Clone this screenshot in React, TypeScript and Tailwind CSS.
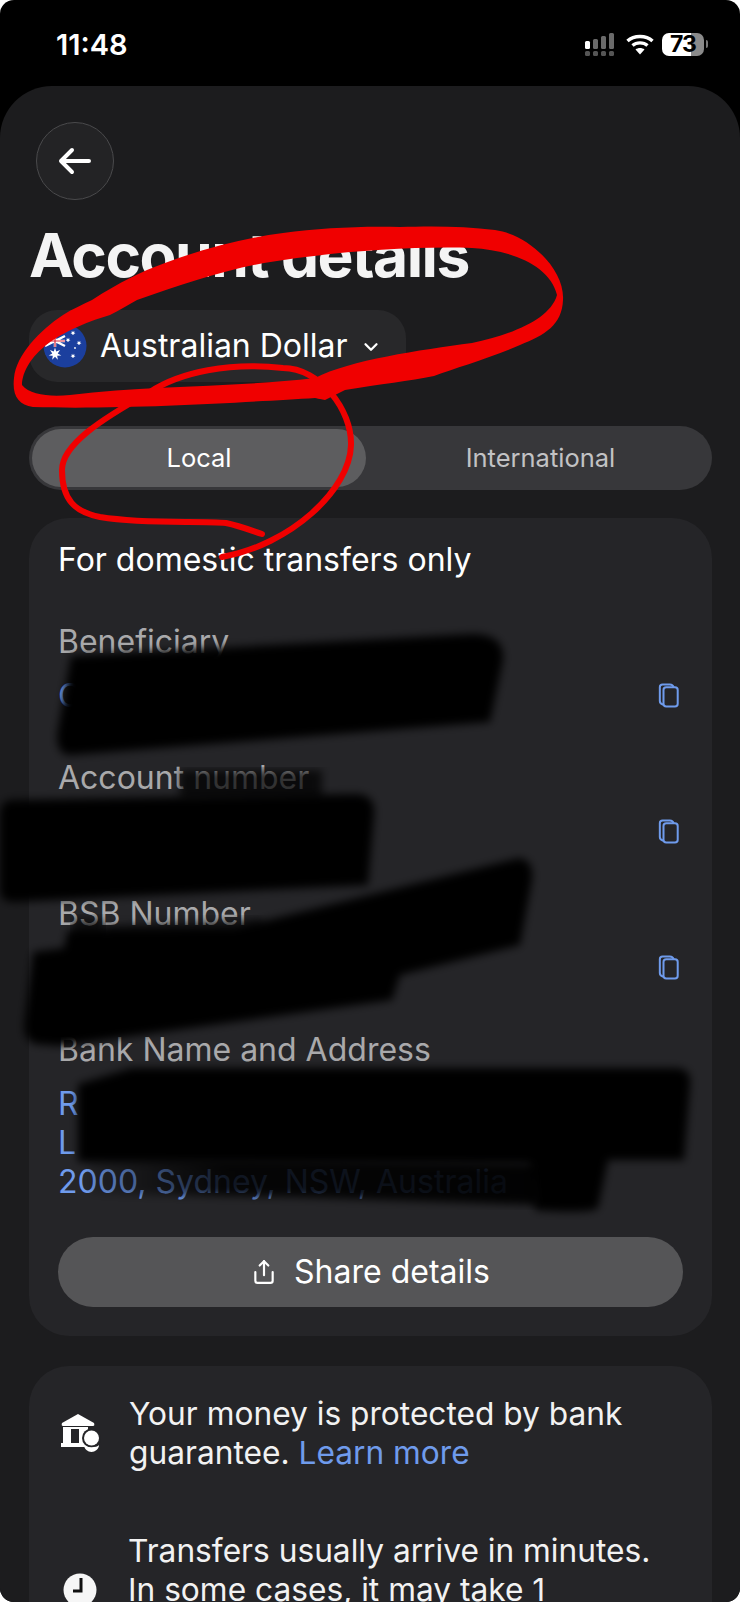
import { ChevronDown, Share } from "lucide-react";

const font = { fontFamily: "Inter, 'Liberation Sans', sans-serif" };

function CopyIcon() {
  return (
    <svg width="22" height="27" viewBox="0 0 24 28" fill="none" stroke="#6f9bec" strokeWidth="2.2">
      <path d="M6 24 C3.5 23.5 2 22 2 20 V5 C2 3 3.5 2 5 2 H13 C15 2 16.5 3 17 5" />
      <rect x="6" y="5" width="15.5" height="21" rx="3" />
    </svg>
  );
}

function BankIcon() {
  return (
    <svg width="40" height="38" viewBox="0 0 40 38" fill="white">
      <path d="M17 0 L33 9 Q34 12 32 12 H2 Q0 12 1 9 Z" />
      <path fillRule="evenodd" d="M2 13 H27 V32 H33 V33 H0 V29 H2 Z M10 15 V29 H18 V15 Z" />
      <circle cx="30.500" cy="24" r="9.500" fill="#252528" />
      <circle cx="30.500" cy="24" r="7.500" />
      <path d="M23 31 C25 34 36 34 38 31 C38 35 34 38 30.500 38 C27 38 23 35 23 31 Z" />
    </svg>
  );
}

function ClockIcon() {
  return (
    <svg width="34" height="34" viewBox="0 0 34 34">
      <circle cx="17" cy="17" r="16.500" fill="#f6f6f6" />
      <path d="M18 5 V18 H10" fill="none" stroke="#111" strokeWidth="3" />
    </svg>
  );
}

// seven pointed star of the flag
function starPoints(cx: number, cy: number, outer: number, inner: number) {
  const points: string[] = [];
  for (let i = 0; i < 14; i++) {
    const r = i % 2 === 0 ? outer : inner;
    const a = -Math.PI / 2 + (i * Math.PI) / 7;
    points.push(`${cx + r * Math.cos(a)},${cy + r * Math.sin(a)}`);
  }
  return points.join(" ");
}

function Flag() {
  return (
    <svg width="44" height="44" viewBox="0 0 44 44">
      <circle cx="22" cy="22" r="21.500" fill="#1b3f9e" />
      <path d="M2 12 L22 22 M22 12 L2 22 M12 10 V23 M1 17 H22" stroke="white" strokeWidth="2.500" />
      <path d="M12 10 V23 M1 17 H22" stroke="#d8283c" strokeWidth="1.200" />
      <polygon points={starPoints(12, 30, 6.5, 2.8)} fill="white" />
      <polygon points={starPoints(30, 9, 2.6, 1.1)} fill="white" />
      <polygon points={starPoints(36, 19, 2.6, 1.1)} fill="white" />
      <polygon points={starPoints(25, 16, 2.6, 1.1)} fill="white" />
      <polygon points={starPoints(30, 32, 2.6, 1.1)} fill="white" />
      <circle cx="32" cy="24" r="0.900" fill="white" />
    </svg>
  );
}

function StatusIcons() {
  return (
    <div className="flex items-center mt-[4px]">
      <svg width="32" height="24" viewBox="0 0 32 24">
        <rect x="1" y="9" width="5" height="8" rx="1.500" fill="white" />
        <rect x="9" y="7" width="5" height="10" rx="1.500" fill="#6a6a6a" />
        <rect x="17" y="4" width="5" height="13" rx="1.500" fill="#6a6a6a" />
        <rect x="25" y="1" width="5" height="16" rx="1.500" fill="#6a6a6a" />
        <rect x="1" y="19" width="5" height="5" rx="1.500" fill="#555" />
        <rect x="9" y="19" width="5" height="5" rx="1.500" fill="#555" />
        <rect x="17" y="19" width="5" height="5" rx="1.500" fill="#555" />
        <rect x="25" y="19" width="5" height="5" rx="1.500" fill="#555" />
      </svg>
      <svg width="28" height="22" viewBox="0 0 28 22" fill="none" stroke="white" strokeWidth="3.400" className="ml-[10px] mr-[8px]">
        <path d="M1.500 8 C8 2 20 2 26.500 8" />
        <path d="M6.500 12.500 C10.500 9 17.500 9 21.500 12.500" />
        <path d="M14 21.500 L9.500 16.500 C12 14.500 16 14.500 18.500 16.500 Z" fill="white" stroke="none" />
      </svg>
      <div className="flex items-center gap-[2px]">
        <div className="w-[42px] h-[23px] rounded-[7px] bg-[linear-gradient(90deg,#fff_0,#fff_70%,#8a8a8a_70%,#8a8a8a_100%)] flex items-center justify-center text-black text-[23px] font-bold tracking-[-1px]">
          73
        </div>
        <div className="w-[2px] h-[8px] bg-[#777] rounded-r-sm" />
      </div>
    </div>
  );
}

function DetailRow({ label, value }: { label: string; value?: string }) {
  return (
    <div className="flex items-start justify-between h-[136px]">
      <div>
        <div className="text-[32px] leading-[39px] text-[#a9a9ab]">{label}</div>
        {value && <div className="text-[32px] leading-[39px] mt-[15px] text-[#6f9bec]">{value}</div>}
      </div>
      <div className="mt-[60px] mr-[4px]">
        <CopyIcon />
      </div>
    </div>
  );
}

function Scribbles() {
  return (
    <svg className="absolute inset-0 pointer-events-none" width="740" height="1602" viewBox="0 0 740 1602">
      <defs>
        <filter id="soft" x="-5%" y="-10%" width="110%" height="120%">
          <feGaussianBlur stdDeviation="4" />
        </filter>
        <linearGradient id="fade" x1="0" x2="1" y1="0" y2="0">
          <stop offset="0" stopColor="#000" stopOpacity="0.15" />
          <stop offset="0.3" stopColor="#000" stopOpacity="0.85" />
          <stop offset="1" stopColor="#000" stopOpacity="0.94" />
        </linearGradient>
      </defs>
      <path d="M180 770 H322 V800 H180 Z" fill="#000" opacity="0.7" filter="url(#soft)" />
      <path d="M72 918 H104 V950 H72 Z" fill="#000" opacity="0.6" filter="url(#soft)" />
      <path d="M104 926 L262 918 V945 H104 Z" fill="#000" opacity="0.5" filter="url(#soft)" />
      <g fill="#000" filter="url(#soft)">
        <path d="M71 656 L472 634 Q505 634 503 660 L490 722 L70 755 Q57 755 57 735 Z" />
        <path d="M10 800 L358 794 Q376 796 374 815 L368 885 L14 902 Q0 902 0 890 V815 Q0 802 10 800 Z" />
        <path d="M236 928 L519 858 Q534 860 532 880 L520 945 L400 975 L392 1000 L60 1046 L35 1044 Q24 1040 24 1025 L33 952 L64 948 L68 930 Z" />
        <path d="M78 1084 L132 1068 H675 Q692 1068 690 1085 L684 1160 H608 L598 1208 Q590 1214 535 1210 L530 1164 L78 1162 Z" />
      </g>
      <path d="M90 1158 L540 1164 V1205 L290 1197 L90 1194 Z" fill="url(#fade)" filter="url(#soft)" />
      <path
        fill="#f00000"
        fillRule="evenodd"
        d="M14 378 C16 355 40 330 63 315 C72 309 82 305 92 300 C120 282 140 272 165 263 C205 248 245 238 283 233 C320 228 360 226 400 227 C430 226 465 226 495 230 C530 235 565 270 563 300 C562 325 545 335 520 345 C490 358 455 368 434 376 C410 381 380 384 345 390 L325 400 L315 398 C250 402 120 410 33 407 C18 405 12 395 14 378 Z M22 385 C22 375 28 360 45 346 C58 335 85 322 110 315 C120 310 128 305 137 300 C180 285 225 270 264 263 C330 252 410 246 472 248 C510 250 550 265 557 295 C550 320 510 335 472 343 C420 350 350 360 315 378 C230 388 150 385 70 395 C50 397 30 395 22 385 Z"
      />
      <circle cx="321" cy="389" r="10" fill="#f00000" />
      <path
        fill="none"
        stroke="#f00000"
        strokeWidth="6"
        strokeLinecap="round"
        d="M222 557 C290 545 350 490 351 445 C352 410 320 368 283 368 C230 362 180 372 150 392 C100 420 62 445 62 470 C62 500 75 512 100 517 C150 525 200 520 226 523 C240 526 250 530 262 534"
      />
    </svg>
  );
}

export default function App() {
  return (
    <div className="w-[740px] h-[1602px] bg-white">
      <div className="relative w-[740px] h-[1602px] overflow-hidden rounded-[14px] bg-black text-white" style={font}>
        <div className="h-[86px] flex items-start justify-between pl-[56px] pr-[32px] pt-[28px]">
          <span className="text-[29px] leading-[34px] font-semibold">11:48</span>
          <StatusIcons />
        </div>

        <div className="h-[1516px] rounded-t-[52px] bg-[#1c1c1e] px-[29px] pt-[36px]">
          <button className="w-[78px] h-[78px] ml-[7px] rounded-full border border-[#4a4a4c] bg-[#232325] flex items-center justify-center">
            <svg width="34" height="28" viewBox="0 0 34 28" fill="none" stroke="white" strokeWidth="4" strokeLinecap="round" strokeLinejoin="round">
              <path d="M31 14 H3 M14 3 L3 14 L14 25" />
            </svg>
          </button>

          <h1 className="mt-[20px] text-[60.500px] leading-[70px] font-bold tracking-[-1.500px] text-[#f4f4f4]">Account details</h1>

          <div className="mt-[20px] w-[377px] h-[72px] rounded-[28px] bg-[#28282a] flex items-center pl-[14px]">
            <Flag />
            <span className="ml-[13px] text-[32px]">Australian Dollar</span>
            <ChevronDown size={22} strokeWidth={2.500} className="ml-[12px] mt-[2px]" />
          </div>

          <div className="mt-[44px] h-[64px] w-[683px] rounded-[32px] bg-[#37373a] flex items-center p-[3px] text-[25.500px]">
            <div className="w-[334px] h-[58px] rounded-[29px] bg-[#5d5d5f] flex items-center justify-center">Local</div>
            <div className="flex-1 flex items-center justify-center pl-[6px] text-[#c2c2c4]">International</div>
          </div>

          <div className="mt-[28px] w-[683px] h-[818px] rounded-[40px] bg-[#252528] pl-[29px] pr-[28px] pt-[23px]">
            <div className="text-[32px] leading-[38px]">For domestic transfers only</div>
            <div className="mt-[43px]">
              <DetailRow label="Beneficiary" value="C" />
              <DetailRow label="Account number" />
              <DetailRow label="BSB Number" />
            </div>
            <div className="text-[32px] leading-[39px] text-[#a9a9ab]">Bank Name and Address</div>
            <div className="mt-[15px] text-[32px] leading-[39px] text-[#6f9bec]">
              <div>R</div>
              <div>L</div>
              <div>2000, Sydney, NSW, Australia</div>
            </div>
            <button className="mt-[36px] w-[625px] h-[70px] rounded-[35px] bg-[#555557] flex items-center justify-center gap-[17px] text-[32px]">
              <Share size={26} strokeWidth={2} />
              Share details
            </button>
          </div>

          <div className="mt-[30px] w-[683px] h-[300px] rounded-[40px] bg-[#252528] pl-[32px] pr-[20px] pt-[28px] text-[31.700px] leading-[39px] text-[#f2f2f2]">
            <div className="flex items-center gap-[28px]">
              <BankIcon />
              <p>
                Your money is protected by bank
                <br />
                guarantee. <span className="text-[#6f9bec]">Learn more</span>
              </p>
            </div>
            <div className="flex items-center gap-[31px] mt-[59px]">
              <div className="ml-[2px] mt-[39px]">
                <ClockIcon />
              </div>
              <p>
                Transfers usually arrive in minutes.
                <br />
                In some cases, it may take 1
              </p>
            </div>
          </div>
        </div>

        <Scribbles />
      </div>
    </div>
  );
}
